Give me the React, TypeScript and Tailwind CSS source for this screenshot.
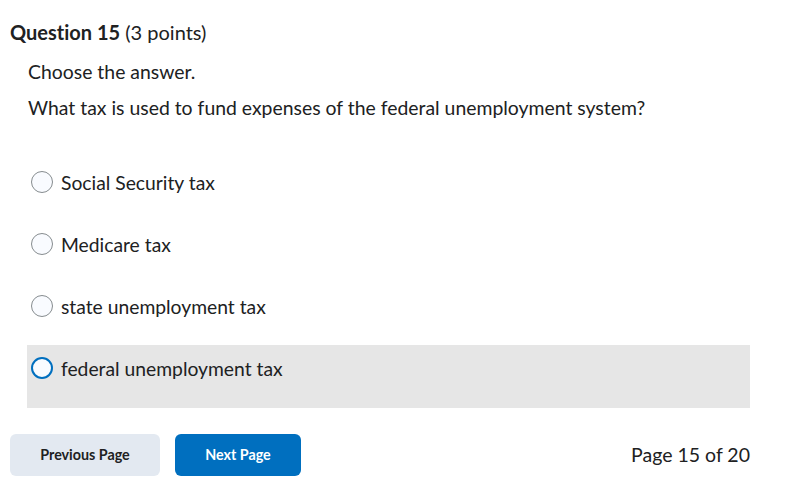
const options = [
  "Social Security tax",
  "Medicare tax",
  "state unemployment tax",
  "federal unemployment tax",
];

const RadioCircle = ({ focused }: { focused: boolean }) => (
  <span
    className={
      focused
        ? "w-[22px] h-[22px] rounded-full border-2 border-[#006fbf] bg-[#f9fbff] shrink-0"
        : "w-[22px] h-[22px] rounded-full border border-[#868c8f] bg-[#f9fbff] shrink-0"
    }
  />
);

export default function App() {
  return (
    <div className="w-[796px] h-[501px] bg-white text-[#202122] font-['Lato','Liberation_Sans',sans-serif] [font-variant-ligatures:none]">
      <div className="pt-[20px] pl-[10px]">
        <h2 className="text-[20px] leading-[24px]">
          <span className="font-bold">Question 15</span> (3 points)
        </h2>
      </div>
      <div className="pl-[28px] mt-[17px] text-[19.4px] leading-[22px]">
        <p>Choose the answer.</p>
        <p className="mt-[14px]">
          What tax is used to fund expenses of the federal unemployment system?
        </p>
      </div>
      <ul className="mt-[40px] ml-[27px] w-[723px]">
        {options.map((opt, i) => {
          const focused = i === options.length - 1;
          return (
            <li
              key={opt}
              className={
                focused
                  ? "flex items-start gap-[8px] h-[63px] pt-[12px] pl-[4px] bg-[#e6e6e6]"
                  : "flex items-start gap-[8px] h-[62px] pt-[12px] pl-[4px]"
              }
            >
              <RadioCircle focused={focused} />
              <span className="pt-[1px] text-[19.3px] leading-[22px]">{opt}</span>
            </li>
          );
        })}
      </ul>
      <div className="flex items-center mt-[26px] pl-[10px] pr-[46px]">
        <button className="w-[150px] h-[42px] rounded-[6px] bg-[#e3e9f1] text-[14.3px] font-bold text-[#202122]">
          Previous Page
        </button>
        <button className="ml-[15px] w-[126px] h-[42px] rounded-[6px] bg-[#006fbf] text-[14.3px] font-bold text-white">
          Next Page
        </button>
        <div className="ml-auto text-[19.5px]">Page 15 of 20</div>
      </div>
    </div>
  );
}
